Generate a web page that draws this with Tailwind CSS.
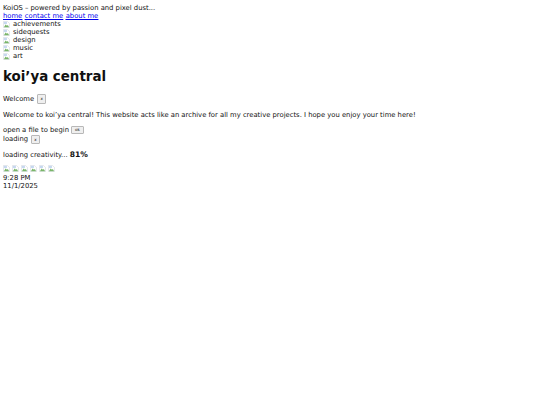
<!DOCTYPE html>
<html lang="en">
<head>
    <meta charset="UTF-8">
    <meta name="viewport" content="width=device-width, initial-scale=1.0">
    <title>KoiOS</title>
    <script src="https://cdn.jsdelivr.net/npm/@tailwindcss/browser@4"></script>
</head>
<body class="bg-white text-[#111] font-['DejaVu_Sans',sans-serif] text-[6.8px] leading-[8px]">
    <!-- Broken image icon, reused everywhere -->
    <svg class="hidden">
        <symbol id="broken" viewBox="0 0 16 16">
            <path d="M1 1h9l5 5v9H1z" fill="#fff" stroke="#c0c7d1"/>
            <path d="M2 2h7v5H2z" fill="#c6d8f0"/>
            <path d="M2 14l4-6 3 3 2-2 3 5z" fill="#7ab56a"/>
        </symbol>
    </svg>

    <div class="px-[3px] pt-[4px]">
        <!-- Top bar -->
        <div>KoiOS – powered by passion and pixel dust...</div>
        <nav class="flex gap-[2.5px] text-[#0000ee] underline">
            <a href="#">home</a>
            <a href="#">contact me</a>
            <a href="#">about me</a>
        </nav>

        <!-- Folder list -->
        <ul>
            <li class="flex items-center gap-[3px] h-[8px]"><svg class="w-[7px] h-[7px]"><use href="#broken"/></svg><span>achievements</span></li>
            <li class="flex items-center gap-[3px] h-[8px]"><svg class="w-[7px] h-[7px]"><use href="#broken"/></svg><span>sidequests</span></li>
            <li class="flex items-center gap-[3px] h-[8px]"><svg class="w-[7px] h-[7px]"><use href="#broken"/></svg><span>design</span></li>
            <li class="flex items-center gap-[3px] h-[8px]"><svg class="w-[7px] h-[7px]"><use href="#broken"/></svg><span>music</span></li>
            <li class="flex items-center gap-[3px] h-[8px]"><svg class="w-[7px] h-[7px]"><use href="#broken"/></svg><span>art</span></li>
        </ul>

        <h1 class="mt-[9px] text-[13.4px] leading-[16px] font-bold">koi’ya central</h1>

        <!-- Welcome window -->
        <div class="mt-[9px] flex items-center gap-[3px] h-[10px]">
            <span>Welcome</span>
            <button class="w-[9px] h-[10px] bg-[#efefef] border border-[#b8b8b8] rounded-[1px] text-[4px] leading-[8px] text-center">x</button>
        </div>
        <p class="mt-[7px]">Welcome to koi’ya central! This website acts like an archive for all my creative projects. I hope you enjoy your time here!</p>

        <!-- File window -->
        <div class="mt-[6px] flex items-center gap-[2px] h-[9px]">
            <span>open a file to begin</span>
            <button class="w-[13px] h-[8px] bg-[#efefef] border border-[#b8b8b8] rounded-[1px] text-[4px] leading-[6px] text-center">ok</button>
        </div>
        <div class="flex items-center gap-[3px] h-[10px]">
            <span>loading</span>
            <button class="w-[9px] h-[9px] bg-[#efefef] border border-[#b8b8b8] rounded-[1px] text-[4px] leading-[7px] text-center">x</button>
        </div>
        <p class="mt-[7px]">loading creativity... <b class="text-[7.6px]">81%</b></p>

        <!-- Taskbar -->
        <div class="mt-[6px] flex gap-[2px]">
            <svg class="w-[7px] h-[7px]"><use href="#broken"/></svg>
            <svg class="w-[7px] h-[7px]"><use href="#broken"/></svg>
            <svg class="w-[7px] h-[7px]"><use href="#broken"/></svg>
            <svg class="w-[7px] h-[7px]"><use href="#broken"/></svg>
            <svg class="w-[7px] h-[7px]"><use href="#broken"/></svg>
            <svg class="w-[7px] h-[7px]"><use href="#broken"/></svg>
        </div>
        <div class="mt-[2px]">9:28 PM</div>
        <div>11/1/2025</div>
    </div>
</body>
</html>
